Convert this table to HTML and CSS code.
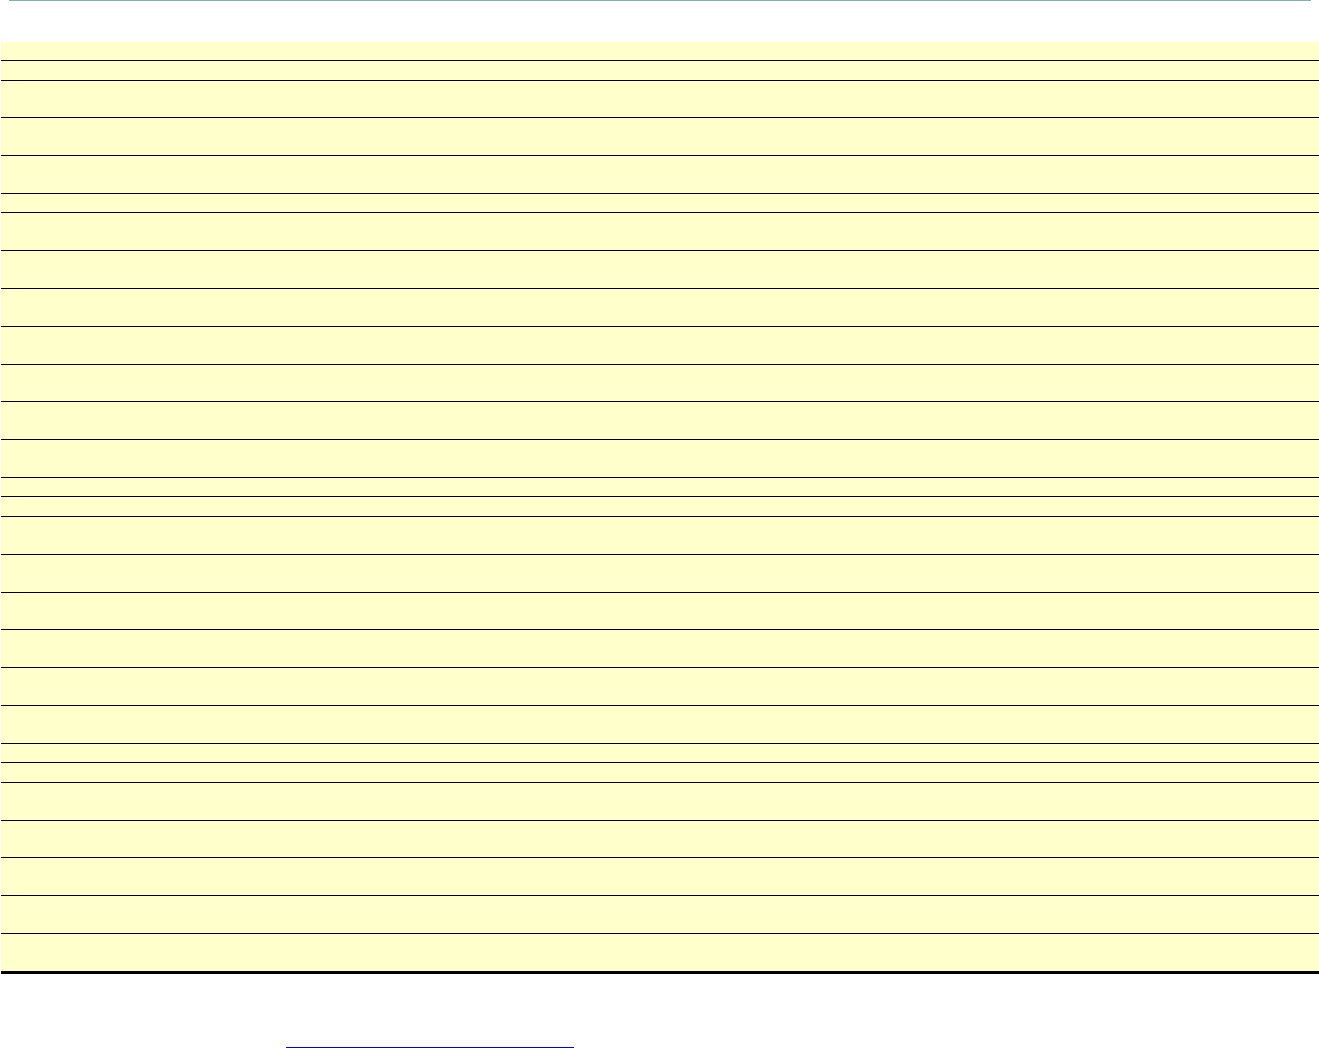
FILE: index.html
```html
<!DOCTYPE html>
<html lang="en">
<head>
    <meta charset="UTF-8">
    <meta name="viewport" content="width=device-width, initial-scale=1.0">
    <title>Sheet</title>
    <link rel="stylesheet" href="styles.css">
</head>
<body>
    <div class="topline"></div>

    <div class="sheet">
        <div class="row first"></div>
        <div class="row short"></div>
        <div class="row tall"></div>
        <div class="row tall"></div>
        <div class="row tall"></div>
        <div class="row short"></div>
        <div class="row tall"></div>
        <div class="row tall"></div>
        <div class="row tall"></div>
        <div class="row tall"></div>
        <div class="row tall"></div>
        <div class="row tall"></div>
        <div class="row tall"></div>
        <div class="row short"></div>
        <div class="row short"></div>
        <div class="row tall"></div>
        <div class="row tall"></div>
        <div class="row tall"></div>
        <div class="row tall"></div>
        <div class="row tall"></div>
        <div class="row tall"></div>
        <div class="row short"></div>
        <div class="row short"></div>
        <div class="row tall"></div>
        <div class="row tall"></div>
        <div class="row tall"></div>
        <div class="row tall"></div>
        <div class="row tall"></div>
    </div>

    <div class="note-rule"></div>
</body>
</html>
```

FILE: styles.css
```css
body {
    margin: 0;
    background-color: white;
    font-family: 'Liberation Sans', Arial, sans-serif;
}
.topline {
    height: 1px;
    margin: 0 8px 0 9px;
    background-color: #7fb2ab;
}
.sheet {
    margin: 41px 0 0 1px;
    background-color: #ffffcc;
    border-bottom: 3px solid black;
}
.row {
    border-top: 1px solid black;
}
.row.first {
    border-top: none;
    height: 18px;
}
.row.short {
    height: 18.5px;
}
.row.tall {
    height: 36.8px;
}
.note-rule {
    width: 288px;
    height: 1px;
    margin: 73px 0 0 286px;
    background-color: #0000cc;
}
```
